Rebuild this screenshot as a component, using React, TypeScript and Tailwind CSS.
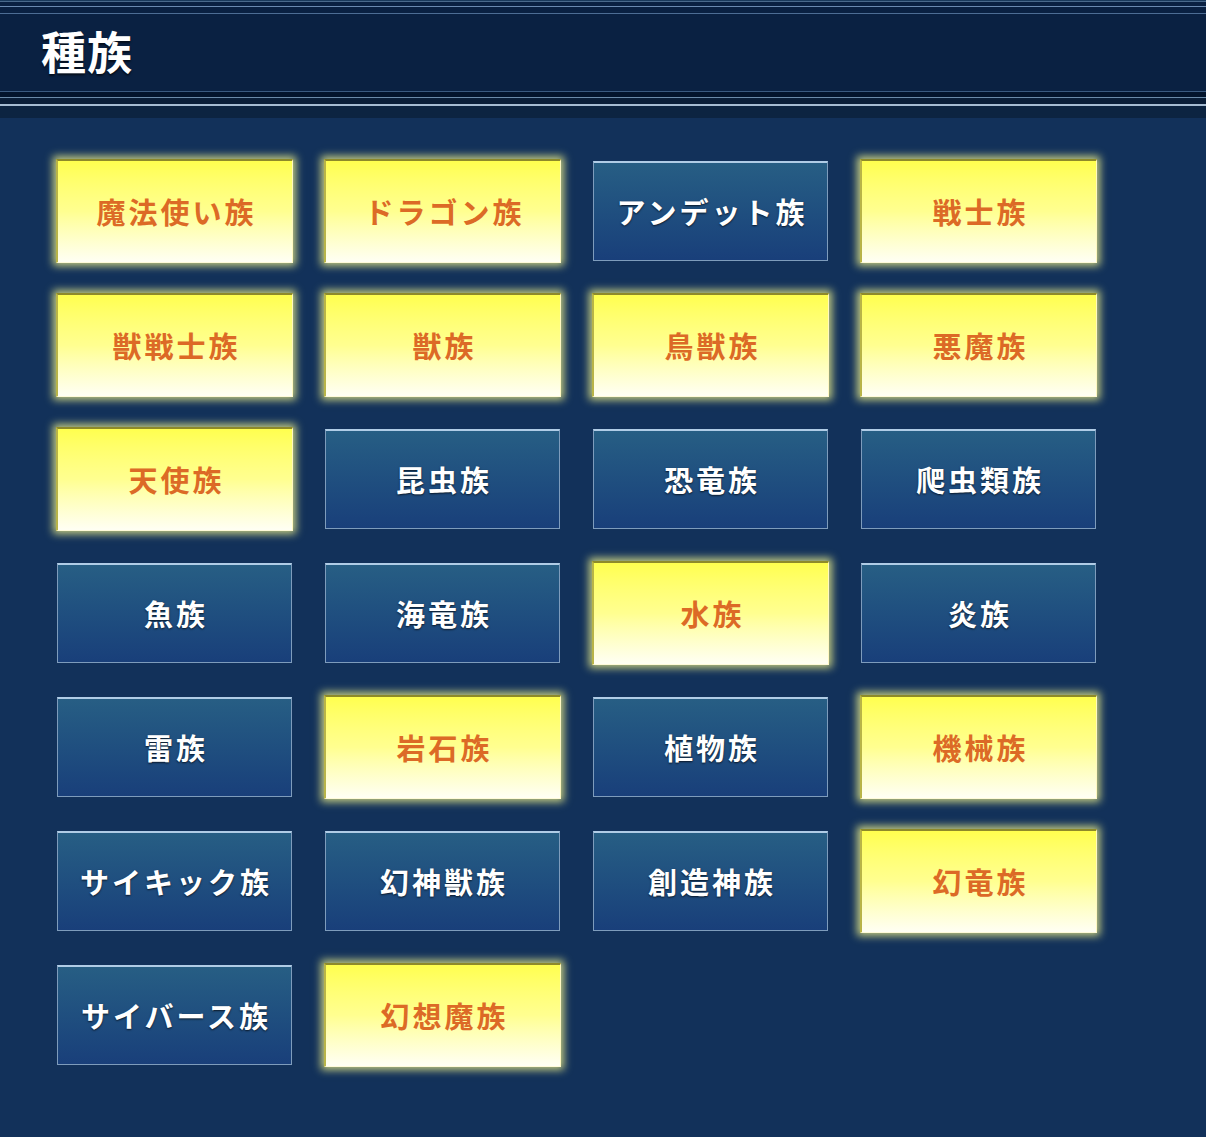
import React from "react";

const items: [string, boolean][] = [
  ["魔法使い族", true],
  ["ドラゴン族", true],
  ["アンデット族", false],
  ["戦士族", true],
  ["獣戦士族", true],
  ["獣族", true],
  ["鳥獣族", true],
  ["悪魔族", true],
  ["天使族", true],
  ["昆虫族", false],
  ["恐竜族", false],
  ["爬虫類族", false],
  ["魚族", false],
  ["海竜族", false],
  ["水族", true],
  ["炎族", false],
  ["雷族", false],
  ["岩石族", true],
  ["植物族", false],
  ["機械族", true],
  ["サイキック族", false],
  ["幻神獣族", false],
  ["創造神族", false],
  ["幻竜族", true],
  ["サイバース族", false],
  ["幻想魔族", true],
];

const font = { fontFamily: '"Noto Sans CJK JP", "Noto Sans", sans-serif' };

export default function App() {
  return (
    <div className="w-[1206px] h-[1137px] bg-[#12315a] overflow-hidden" style={font}>
      <div className="bg-[#0a2142]">
        <div className="h-px bg-[#1a3a5c]" />
        <div className="h-px bg-[#4a6a8c]" />
        <div className="h-[4px]" />
        <div className="h-px bg-[#6a8ab0]" />
        <div className="h-[6px]" />
        <div className="h-px bg-[#4d6d94]" />
        <div className="h-[77px] flex items-center pl-[41px]">
          <span className="text-white text-[45px] font-bold leading-none tracking-[1px] [text-shadow:0_2px_2px_rgba(0,0,0,0.6)] -mt-[4px]">
            種族
          </span>
        </div>
        <div className="h-px bg-[#3a5a80]" />
        <div className="h-[5px] bg-[#03142c]" />
        <div className="h-px bg-[#6a8aa8]" />
        <div className="h-[6px] bg-[#0a1e38]" />
        <div className="h-[2px] bg-[#a6bcd2]" />
        <div className="h-[12px] bg-[#0c2441]" />
      </div>
      <div className="grid grid-cols-[repeat(4,235px)] gap-x-[33px] gap-y-[34px] pl-[57px] pt-[43px]">
        {items.map(([name, on]) =>
          on ? (
            <div
              key={name}
              className="h-[104px] -mx-px -my-[2px] flex items-center justify-center bg-gradient-to-b from-[#ffff4e] via-[#ffff90] to-[#fffff4] border-t-2 border-l-2 border-t-[#8e8a2a] border-l-[#b8b448] border-r border-b border-r-[#fff8c0] border-b-[#fffbd8] shadow-[0_0_8px_3px_rgba(255,255,140,0.75)]"
            >
              <span className="text-[#dc6a26] text-[29px] font-bold tracking-[3px] leading-none pl-[3px]">
                {name}
              </span>
            </div>
          ) : (
            <div
              key={name}
              className="h-[100px] flex items-center justify-center bg-gradient-to-b from-[#275e84] to-[#193f7a] border border-[#7e9cbc] border-t-[#b0cce6] border-t-2"
            >
              <span className="text-white text-[29px] font-bold tracking-[3px] leading-none pl-[3px] [text-shadow:0_1px_2px_rgba(0,0,0,0.7)]">
                {name}
              </span>
            </div>
          )
        )}
      </div>
    </div>
  );
}
